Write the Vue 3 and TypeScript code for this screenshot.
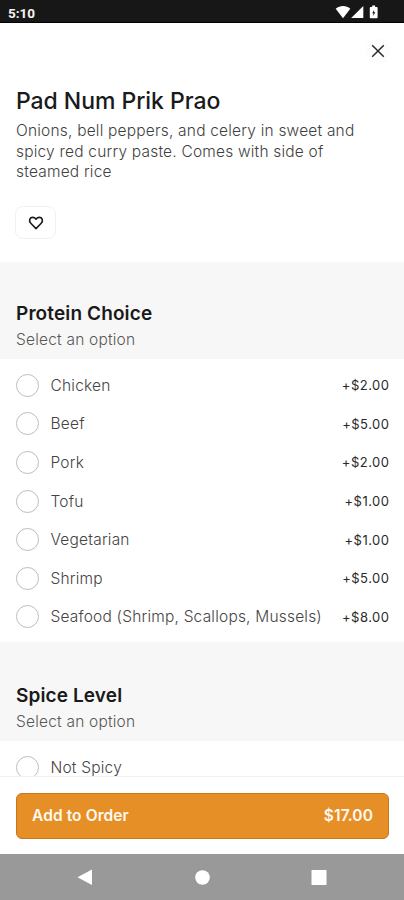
<script setup lang="ts">
interface Choice {
  name: string
  price?: string
}
interface Group {
  title: string
  hint: string
  choices: Choice[]
}

const groups: Group[] = [
  {
    title: 'Protein Choice',
    hint: 'Select an option',
    choices: [
      { name: 'Chicken', price: '+$2.00' },
      { name: 'Beef', price: '+$5.00' },
      { name: 'Pork', price: '+$2.00' },
      { name: 'Tofu', price: '+$1.00' },
      { name: 'Vegetarian', price: '+$1.00' },
      { name: 'Shrimp', price: '+$5.00' },
      { name: 'Seafood (Shrimp, Scallops, Mussels)', price: '+$8.00' },
    ],
  },
  {
    title: 'Spice Level',
    hint: 'Select an option',
    choices: [{ name: 'Not Spicy' }],
  },
]
</script>

<template>
  <div class="screen">
    <header class="status">
      <span class="clock">5:10</span>
      <svg class="status-icons" width="48" height="16" viewBox="0 0 48 16">
        <path d="M0.7 4.8C5 1.2 11.3 1.2 15.3 4.8L8 14.2Z" fill="#fff" />
        <path d="M28.3 2V14H16.2Z" fill="#fff" />
        <path d="M35.7 3h1.5V1.6h2.9V3h1.6q.9 0 .9.9v9.4q0 .9-.9.9h-6q-.9 0-.9-.9V3.900q0-.9.9-.9Z" fill="#fff" />
        <path d="M39.1 6 37.300 9.200h1.100V12l1.800-3.700h-1.100Z" fill="#171717" />
      </svg>
    </header>

    <main class="content">
      <section class="intro">
        <div class="close-row">
          <button class="close" aria-label="Close">
            <svg width="14" height="14" viewBox="0 0 14 14">
              <path d="M1.2 1.2 12.8 12.8M12.8 1.2 1.2 12.8" fill="none" stroke="#2a2a2a" stroke-width="1.5" />
            </svg>
          </button>
        </div>
        <h1 class="title">Pad Num Prik Prao</h1>
        <p class="desc">Onions, bell peppers, and celery in sweet and spicy red curry paste. Comes with side of steamed rice</p>
        <button class="fav" aria-label="Favorite">
          <svg width="16" height="14" viewBox="0 0 16 14">
            <path
              d="M8 12.6 3 7.5C.2 4.600 1.900 1.400 4.700 1.400 6.200 1.400 7.200 2.100 8 3.200 8.800 2.100 9.800 1.400 11.300 1.400c2.800 0 4.500 3.200 1.700 6.100Z"
              fill="none"
              stroke="#1c1c1c"
              stroke-width="1.6"
              stroke-linejoin="round"
            />
          </svg>
        </button>
      </section>

      <section v-for="group in groups" :key="group.title" class="group">
        <div class="group-head">
          <h2 class="group-title">{{ group.title }}</h2>
          <p class="hint">{{ group.hint }}</p>
        </div>
        <ul class="choices">
          <li v-for="choice in group.choices" :key="choice.name" class="choice">
            <span class="radio"></span>
            <span class="name">{{ choice.name }}</span>
            <span v-if="choice.price" class="price">{{ choice.price }}</span>
          </li>
        </ul>
      </section>
    </main>

    <div class="footer">
      <button class="add"><span class="add-label">Add to Order</span><span class="total">$17.00</span></button>
    </div>

    <nav class="nav">
      <svg width="404" height="46" viewBox="0 0 404 46">
        <path d="M77.5 23.2 92 15.600V31Z" fill="#fff" />
        <circle cx="202.500" cy="23.500" r="7.300" fill="#fff" />
        <rect x="311.500" y="16" width="15" height="15" rx=".5" fill="#fff" />
      </svg>
    </nav>
  </div>
</template>

<style>
body {
  background: #fff;
}
</style>

<style scoped>
.screen {
  width: 404px;
  height: 900px;
  display: flex;
  flex-direction: column;
  overflow: hidden;
  background: #fff;
  color: #1a1a1a;
  font-family: Inter, sans-serif;
}
.screen * {
  box-sizing: border-box;
}
button {
  border: 0;
  padding: 0;
  font-family: inherit;
}
h1,
h2,
p,
ul {
  margin: 0;
  padding: 0;
}
.status {
  flex: none;
  height: 23px;
  display: flex;
  align-items: center;
  justify-content: space-between;
  padding: 2px 21px 0 8px;
  background: #171717;
  border-bottom: 1px solid #000;
}
.clock {
  padding-top: 1px;
  color: #f4f4f4;
  font: 700 13.5px/16px Roboto, sans-serif;
}
.content {
  flex: 1;
  min-height: 0;
  overflow: hidden;
}
.intro {
  height: 239px;
  padding: 15px 13px 0 16px;
}
.close-row {
  display: flex;
  justify-content: flex-end;
}
.close {
  width: 26px;
  height: 26px;
  display: grid;
  place-items: center;
  border-radius: 13px;
  background: #fdfdfd;
}
.title {
  margin-top: 22px;
  font-size: 23px;
  line-height: 30px;
  font-weight: 500;
  letter-spacing: -0.05px;
}
.desc {
  width: 350px;
  margin-top: 5px;
  color: #3f3f3f;
  font-size: 15.5px;
  line-height: 20.7px;
  font-weight: 300;
  letter-spacing: 0.2px;
}
.fav {
  width: 41px;
  height: 33px;
  margin-top: 23px;
  margin-left: -1px;
  display: grid;
  place-items: center;
  border: 1px solid #f1f1f1;
  border-radius: 8px;
  background: #fff;
}
.group-head {
  height: 97px;
  padding: 39px 16px 0;
  background: #f7f7f7;
}
.group + .group .group-head {
  height: 99px;
  padding-top: 41px;
}
.group-title {
  font-size: 19px;
  line-height: 26px;
  font-weight: 600;
  letter-spacing: 0.12px;
}
.hint {
  margin-top: 3px;
  color: #585858;
  font-size: 15.5px;
  line-height: 20px;
  font-weight: 300;
  letter-spacing: 0.2px;
}
.choices {
  padding: 7px 15px 6px 16px;
  list-style: none;
}
.choice {
  height: 38.6px;
  display: flex;
  align-items: center;
}
.radio {
  flex: none;
  width: 23px;
  height: 23px;
  margin-right: 11.5px;
  border: 1px solid #bdbdbd;
  border-radius: 50%;
}
.name {
  flex: 1;
  padding-top: 1px;
  color: #444;
  font-size: 15.5px;
  line-height: 20px;
  font-weight: 300;
  letter-spacing: 0.2px;
  white-space: nowrap;
}
.price {
  margin-right: -0.5px;
  color: #2a2a2a;
  font-size: 13px;
  line-height: 18px;
  letter-spacing: 0.5px;
}
.footer {
  flex: none;
  height: 78px;
  padding: 16px 15px 0 16px;
  border-top: 1px solid #f0f0f0;
  background: #fff;
}
.add {
  width: 100%;
  height: 46px;
  display: flex;
  align-items: center;
  justify-content: space-between;
  padding: 0 15px 1px;
  border: 1px solid #c5771c;
  border-radius: 6px;
  background: #e78f27;
  color: #fffaf2;
  font-size: 15.5px;
  font-weight: 600;
  letter-spacing: 0.1px;
}
.nav {
  flex: none;
  height: 46px;
  background: #999;
}
.nav svg {
  display: block;
}
</style>
